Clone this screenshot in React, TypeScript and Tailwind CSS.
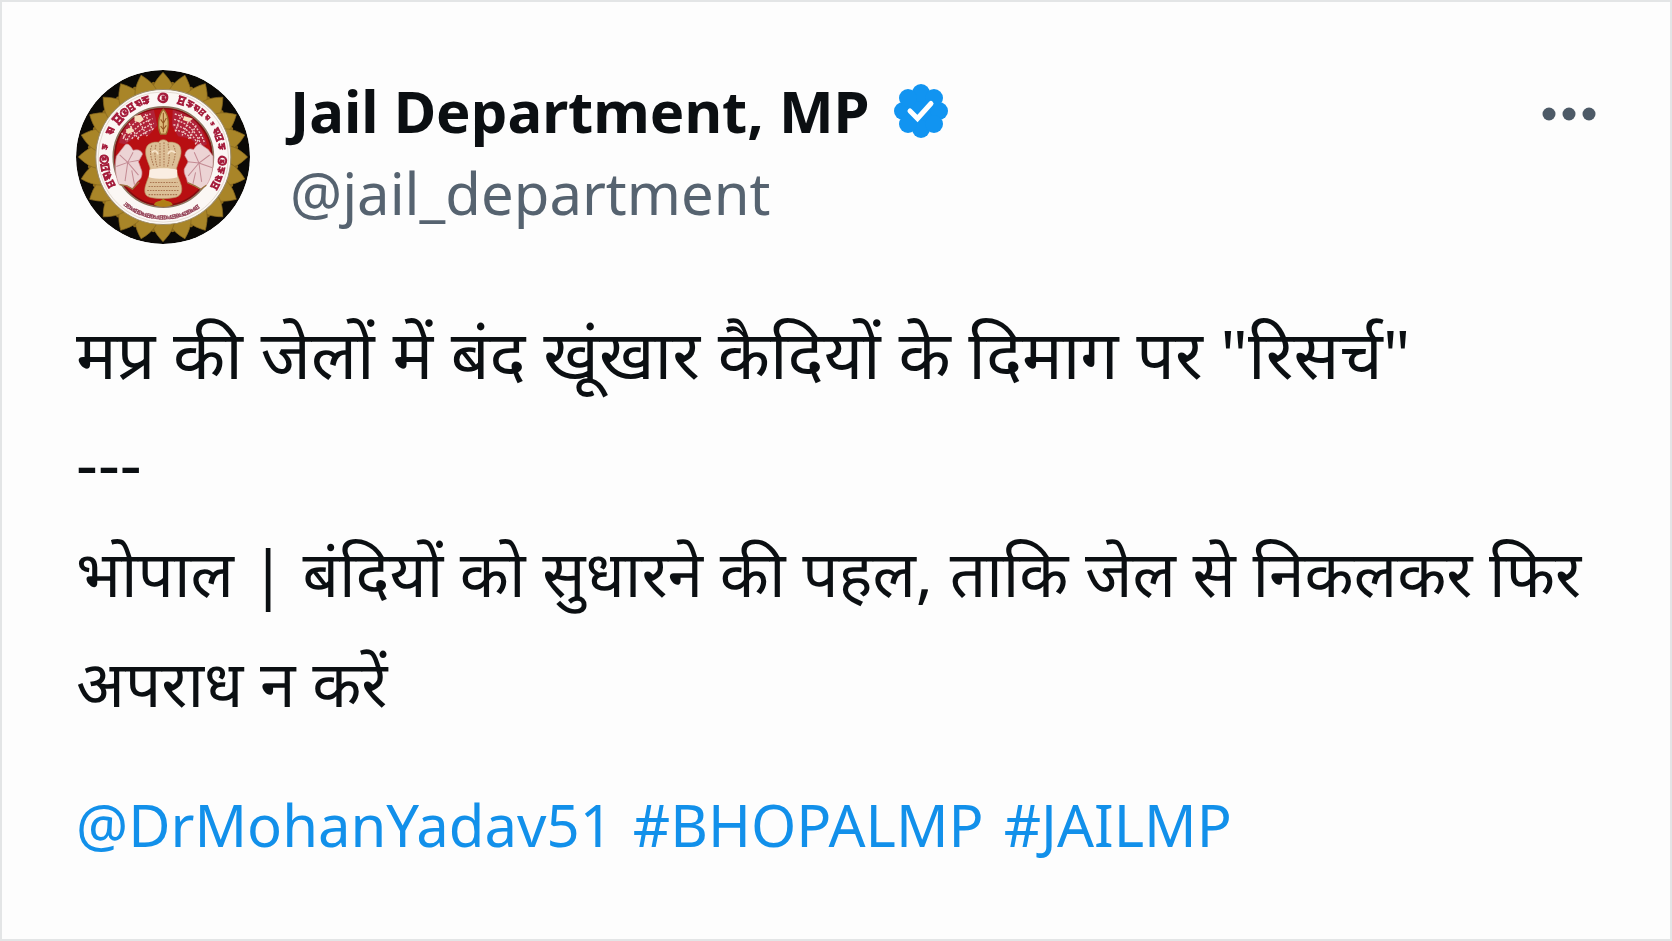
import React from "react";

const PETALS = Array.from({ length: 24 }, (_, i) => i * 15);

// angle (clockwise from the top), glyph shape index and scale of the letters on the white ring
const RING_MARKS: [number, number, number][] = [
    [0, 3, 13],
    [18, 0, 12], [27, 1, 11], [34, 2, 10], [41, 0, 9], [48, 2, 8], [56, 1, 6],
    [64, 2, 11], [71, 0, 11], [80, 1, 11],
    [94, 3, 12], [103, 1, 11], [111, 2, 11], [119, 0, 11],
    [-17, 1, 12], [-25, 2, 11], [-33, 0, 11], [-41, 3, 11], [-50, 0, 14],
    [-64, 2, 12], [-80, 1, 9], [-92, 3, 12], [-100, 0, 12], [-109, 2, 13], [-117, 0, 11],
];

const MARK_SHAPES = [
    "M-1-.9H1M-.6-.9V.9M.5-.9V.8M-.6.1H.5M-1 .9H.9",
    "M-1-.8H.9M0-.8V1M-.8-.1C-.4-.6 0-.1 0 .2S-.7.8-.9.3M.8 0C.4-.4 0 .2.6.6",
    "M-.9-.7H.9M.7-.7V.9M-.7-.1C0-.6.2.1-.4.3L.3.9M.7.2H0",
    "M-.8-.7C-.2-1.2 1-1 .9 0S-.2 1.2-.8.7-1.1-.3-.8-.7M-.4-.3H.5M-.4.3H.5M0-.5V.6",
];

const BOTTOM_MARKS = Array.from({ length: 25 }, (_, i) => 146 + i * 3);

const Emblem = () => {
    return (
        <svg viewBox="30 31 518 518" className="size-[174px] shrink-0 rounded-full" role="img" aria-label="Jail Department emblem">
            <circle cx="289" cy="290" r="259" fill="#0b0906" />

            {/* Gold petals, back row then front row */}
            {PETALS.map((a) => (
                <path
                    key={`back-${a}`}
                    d="M246 118C243 92 270 74 289 64C308 74 335 92 332 118Z"
                    fill="#8f6c1c"
                    transform={`rotate(${a + 7.5} 289 290)`}
                />
            ))}
            {PETALS.map((a) => (
                <path
                    key={`front-${a}`}
                    d="M256 122C250 92 260 68 289 38C318 68 328 92 322 122Z"
                    fill="#a98528"
                    stroke="#87671f"
                    strokeWidth="2"
                    transform={`rotate(${a} 289 290)`}
                />
            ))}

            {/* White ring */}
            <circle cx="290" cy="290" r="201" fill="#fbf7f4" stroke="#9a8a6a" strokeWidth="3" />
            <circle cx="290" cy="290" r="194" fill="none" stroke="#d9cec2" strokeWidth="2" />
            {RING_MARKS.map(([a, shape, size]) => (
                <path
                    key={`mark-${a}`}
                    d={MARK_SHAPES[shape]}
                    fill="none"
                    stroke="#a51d3c"
                    strokeWidth="0.5"
                    transform={`rotate(${a} 290 290) translate(290 114) scale(${size})`}
                />
            ))}
            {BOTTOM_MARKS.map((a, i) => (
                <path
                    key={`small-${a}`}
                    d={MARK_SHAPES[i % 4]}
                    fill="none"
                    stroke="#96465a"
                    strokeWidth="0.45"
                    transform={`rotate(${a} 290 290) translate(290 110) scale(6)`}
                />
            ))}

            {/* Red field */}
            <circle cx="290" cy="290" r="149" fill="#b80f12" stroke="#8b7560" strokeWidth="5" />
            <circle cx="290" cy="290" r="144" fill="none" stroke="#7f0c10" strokeWidth="4" />

            {/* Leaf canopy */}
            <path d="M158 248C168 196 205 160 262 150L272 196L248 224L205 232L176 252Z" fill="#b02238" />
            <path d="M318 150C372 160 408 196 420 252L398 262L372 236L334 228L316 196Z" fill="#b02238" />
            <g fill="none" stroke="#efc9c4" strokeWidth="4" strokeDasharray="6 4">
                <path d="M170 236C184 204 208 178 252 162" />
                <path d="M182 240C196 212 216 192 258 176" />
                <path d="M196 236C210 218 226 204 262 190" />
                <path d="M214 234C224 222 240 214 264 204" />
                <path d="M166 218L182 244M188 190L216 238M212 172L242 228M236 162L258 210" />
                <path d="M324 162C368 174 396 204 412 246" />
                <path d="M322 178C362 188 386 212 402 254" />
                <path d="M320 194C352 200 374 216 390 248" />
                <path d="M324 210C344 212 362 222 374 236" />
                <path d="M344 162L326 214M368 176L346 226M388 196L364 238M404 222L384 254" />
            </g>
            <path d="M204 168L222 164L232 178L220 188L204 182ZM178 208L196 202L202 214L184 222ZM352 168L378 176L366 186L348 180Z" fill="#f6dfbd" />

            {/* Bud over the capital */}
            <path d="M290 148C308 166 308 202 298 222H282C272 202 274 166 290 148Z" fill="#dcb878" stroke="#9c6a2c" strokeWidth="4" />
            <path d="M290 158V216M282 178L290 190L299 174M282 198L290 208L299 196" fill="none" stroke="#94521f" strokeWidth="3" />

            {/* Side figures */}
            <g fill="#ecd3d4" stroke="#c98c92" strokeWidth="2">
                <path d="M176 254C186 246 194 260 200 270C214 266 226 270 228 282L216 304L226 332C228 348 222 358 214 362L198 384L182 376L158 372C148 350 144 318 150 288L162 272Z" />
                <path d="M404 254C394 246 386 260 380 268C366 262 356 270 354 286L364 304L352 326C350 342 360 350 362 366L384 376L400 386L420 372C434 350 440 320 438 288L424 268Z" />
            </g>
            <g fill="none" stroke="#c48b94" strokeWidth="3">
                <path d="M160 284L184 306L150 318M184 306L200 276M184 306L218 300M184 306L216 344M184 306L176 362M196 330L204 372" />
                <path d="M428 284L396 308L436 322M396 308L382 276M396 308L362 304M396 308L364 346M396 308L404 364M386 336L378 370" />
            </g>
            <path d="M160 372L182 376L198 386L218 364" fill="none" stroke="#9b7440" strokeWidth="4" />
            <path d="M362 366L384 376L402 386L418 374" fill="none" stroke="#9b7440" strokeWidth="4" />

            {/* Lion capital */}
            <path
                d="M276 246C280 236 300 236 304 246C322 244 340 250 342 266C346 284 336 300 330 322C328 340 338 354 344 376C348 396 340 408 322 411C300 415 276 415 254 411C236 408 232 396 236 378C242 356 252 340 250 322C244 302 234 286 238 266C242 250 258 244 276 246Z"
                fill="#dcbf97"
                stroke="#b98558"
                strokeWidth="2"
            />
            <path d="M249 328C270 322 312 322 331 328V350C312 356 268 356 247 350Z" fill="#faeee2" />
            <g fill="none" stroke="#ab7752" strokeWidth="3" strokeDasharray="5 3">
                <path d="M256 256C248 270 252 290 262 318M268 254C262 280 266 300 272 320M280 248V320M292 246V320M304 250C310 280 308 300 302 320M320 256C330 272 324 296 316 318" />
                <path d="M250 366H332M246 378H336M242 390H338M246 402H334" />
            </g>
            <path d="M256 276C264 268 272 272 274 282M304 282C308 270 318 270 326 278" fill="none" stroke="#f6e4ca" strokeWidth="5" />
            <path d="M262 432C268 418 280 424 290 414C300 424 312 418 318 432C300 440 280 440 262 432Z" fill="#b08018" />
        </svg>
    );
};

const VerifiedBadge = () => {
    return (
        <svg viewBox="0 0 54 54" className="size-[54px] shrink-0" role="img" aria-label="Verified account">
            <g fill="#1194f1">
                <circle cx="27" cy="27" r="21" />
                <circle cx="27" cy="9" r="9" />
                <circle cx="27" cy="45" r="9" />
                <circle cx="9" cy="27" r="9" />
                <circle cx="45" cy="27" r="9" />
                <circle cx="14" cy="14" r="9" />
                <circle cx="40" cy="14" r="9" />
                <circle cx="14" cy="40" r="9" />
                <circle cx="40" cy="40" r="9" />
            </g>
            <path d="M16 27L23.5 34.5L37 19.5" fill="none" stroke="#fff" strokeWidth="5" strokeLinecap="round" />
        </svg>
    );
};

const App: React.FC = () => {
    return (
        <article className="min-h-screen w-full border-2 border-[#e3e5e6] bg-[#fdfdfd] px-[74px] pt-[68px] pb-10 font-['Noto_Sans','Noto_Sans_Devanagari',sans-serif] text-[#0b0f12]">
            <header className="flex items-start gap-10">
                <Emblem />

                {/* Name and handle */}
                <div className="flex-1">
                    <div className="flex items-center gap-6">
                        <h1 className="text-[58px] leading-[82px] font-bold">Jail Department, MP</h1>
                        <VerifiedBadge />
                    </div>
                    <a href="#profile" className="block text-[58px] leading-[82px] text-[#566370]">@jail_department</a>
                </div>

                <button type="button" aria-label="More options" className="mt-[37px]">
                    <svg viewBox="0 0 54 14" className="h-[14px] w-[54px]" fill="#4d5a67">
                        <circle cx="7" cy="7" r="6.5" />
                        <circle cx="27" cy="7" r="6.5" />
                        <circle cx="47" cy="7" r="6.5" />
                    </svg>
                </button>
            </header>

            <div lang="hi" className="mt-[54px] text-[64px] leading-[110px]">
                <p className="text-[68px]">मप्र की जेलों में बंद खूंखार कैदियों के दिमाग पर "रिसर्च"</p>
                <p className="text-[68px]">---</p>
                <p>भोपाल | बंदियों को सुधारने की पहल, ताकि जेल से निकलकर फिर अपराध न करें</p>
            </div>

            <p className="mt-[32px] flex flex-wrap gap-x-5 text-[58px] leading-[110px] text-[#1290ea]">
                <a href="#drmohanyadav51">@DrMohanYadav51</a>
                <a href="#bhopalmp">#BHOPALMP</a>
                <a href="#jailmp">#JAILMP</a>
            </p>
        </article>
    );
};

export default App;
